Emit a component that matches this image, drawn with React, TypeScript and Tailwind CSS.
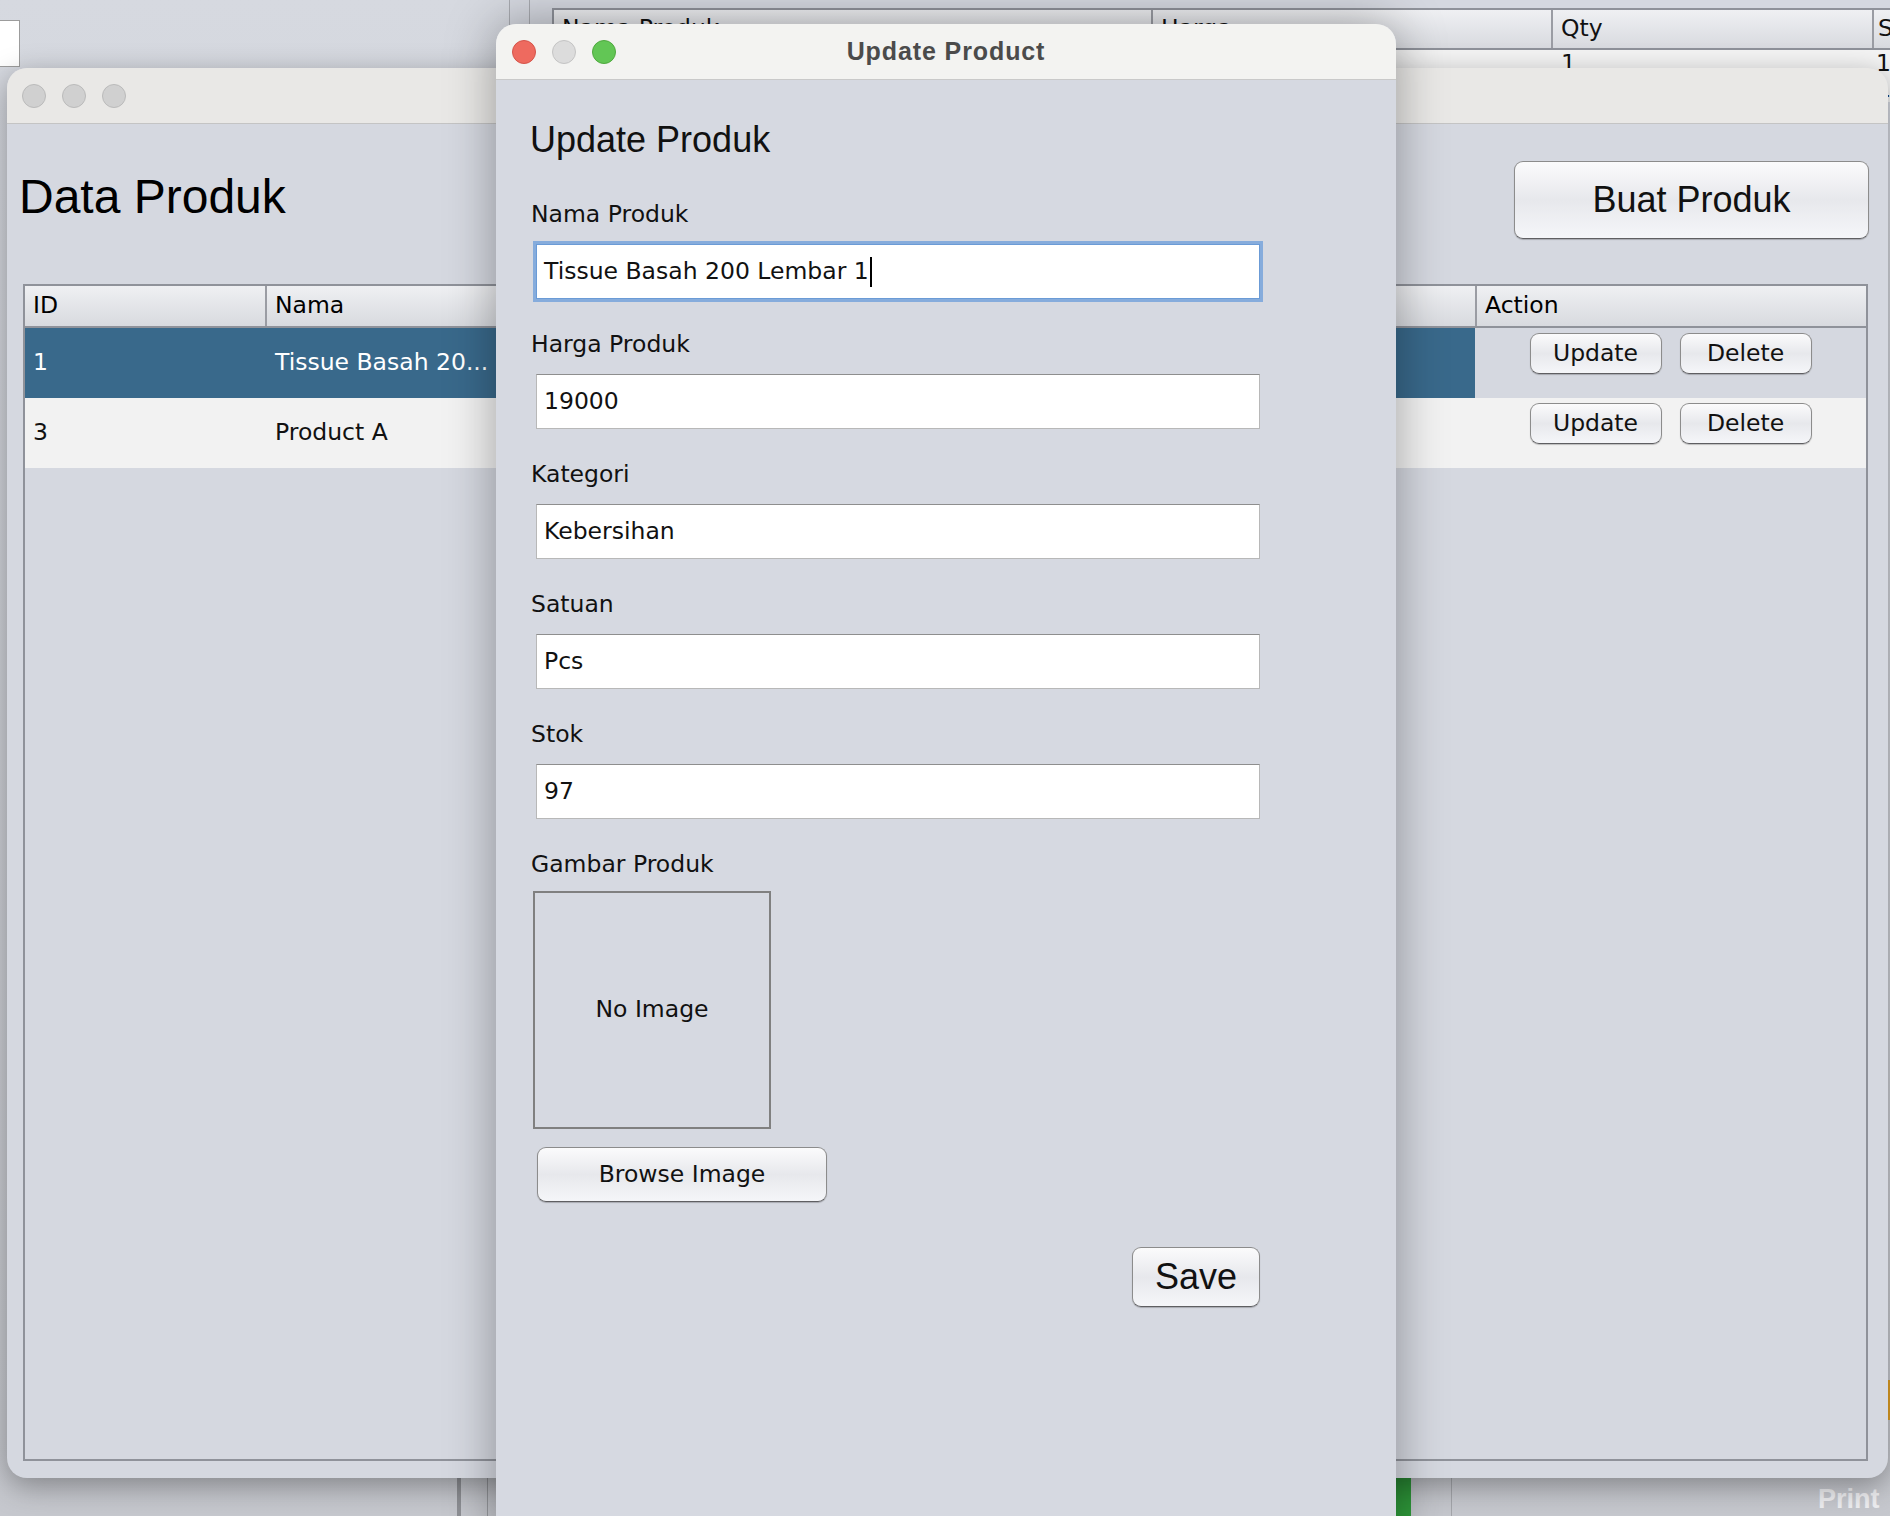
import type { ReactNode } from "react";

const LUCIDA = "font-['DejaVu_Sans',sans-serif]";

function AquaButton({
  children,
  className,
}: {
  children: ReactNode;
  className: string;
}) {
  return (
    <button
      className={`flex items-center justify-center rounded-[9px] border border-[#8c8c8c] border-b-[#5f5f62] bg-linear-to-b from-[#fbfbfc] via-[#e7e8ec] to-[#f5f6f9] text-[#111] shadow-[0_1px_1px_rgba(0,0,0,0.22)] ${className}`}
    >
      {children}
    </button>
  );
}

function Field({
  label,
  value,
  focused,
  first,
}: {
  label: string;
  value: string;
  focused?: boolean;
  first?: boolean;
}) {
  return (
    <div className={first ? "mt-[44px] flex flex-col" : "mt-[32px] flex flex-col"}>
      <div className="h-[27px] text-[23.5px] leading-[27px] text-[#111]">{label}</div>
      <div
        className={
          focused
            ? "mt-[16px] ml-[5px] flex h-[55px] w-[724px] items-center border border-[#6b9bd6] bg-white pl-[7px] shadow-[0_0_0_3px_#86acdc]"
            : "mt-[16px] ml-[5px] flex h-[55px] w-[724px] items-center border border-[#b8b8b8] border-t-[#8e8e8e] bg-white pl-[7px]"
        }
      >
        <span className="text-[23.5px] leading-[27px] text-[#111]">{value}</span>
        {focused && <span className="ml-[1px] inline-block h-[30px] w-[2px] bg-black" />}
      </div>
    </div>
  );
}

function Lights({ colors }: { colors: string[] }) {
  return (
    <div className="flex items-center gap-[16px]">
      {colors.map((c, i) => (
        <span
          key={i}
          className={`h-[24px] w-[24px] rounded-full border ${c}`}
        />
      ))}
    </div>
  );
}

const cols = ["w-[240px]", "w-[420px]", "w-[300px]", "w-[240px]", "w-[250px]"];

function DataWindow() {
  const rows = [
    { id: "1", name: "Tissue Basah 20...", selected: true },
    { id: "3", name: "Product A", selected: false },
  ];
  return (
    <div className="absolute left-[7px] top-[68px] flex h-[1410px] w-[1881px] flex-col overflow-hidden rounded-[20px] bg-[#d5d8e0] shadow-[0_8px_30px_rgba(0,0,0,0.35)]">
      <div className="flex h-[56px] items-center border-b border-[#c4c4c4] bg-[#e9e8e6] pl-[15px]">
        <Lights
          colors={[
            "bg-[#d0d0d0] border-[#bababa]",
            "bg-[#d0d0d0] border-[#bababa]",
            "bg-[#d0d0d0] border-[#bababa]",
          ]}
        />
      </div>
      <div className="flex flex-1 flex-col pb-[17px] pl-[16px] pr-[20px]">
        <div className="flex h-[160px] items-start justify-between">
          <div className="ml-[-4px] mt-[49px] font-['Liberation_Sans',sans-serif] text-[48px] leading-[48px] text-black">
            Data Produk
          </div>
          <AquaButton className="mt-[37px] mr-[-1px] h-[78px] w-[355px] font-['Liberation_Sans',sans-serif] text-[36px]">
            Buat Produk
          </AquaButton>
        </div>
        <div className={`flex flex-1 flex-col border-2 border-[#8f929a] ${LUCIDA} text-[23.5px]`}>
          <div className="flex h-[42px] border-b-2 border-[#8f929a] bg-linear-to-b from-[#eff0f3] to-[#d8dadf]">
            {["ID", "Nama", "Harga", "Kategori", "Stok"].map((h, i) => (
              <div
                key={h}
                className={`${cols[i]} flex shrink-0 items-center pl-[8px] ${i > 0 ? "border-l-2 border-[#9a9ca3]" : ""}`}
              >
                {h}
              </div>
            ))}
            <div className="flex flex-1 items-center border-l-2 border-[#9a9ca3] pl-[8px]">Action</div>
          </div>
          {rows.map((r) => (
            <div
              key={r.id}
              className={r.selected ? "flex h-[70px]" : "flex h-[70px] bg-[#f2f2f2]"}
            >
              {[r.id, r.name, "", "", ""].map((v, i) => (
                <div
                  key={i}
                  className={`${cols[i]} flex shrink-0 items-center whitespace-nowrap ${i === 0 ? "pl-[8px]" : "pl-[10px]"} ${r.selected ? "bg-[#39698b] text-white" : "text-[#111]"}`}
                >
                  {v}
                </div>
              ))}
              <div className="flex flex-1 items-start justify-center gap-[18px] pt-[5px]">
                <AquaButton className="h-[41px] w-[132px] text-[23.5px]">Update</AquaButton>
                <AquaButton className="h-[41px] w-[132px] text-[23.5px]">Delete</AquaButton>
              </div>
            </div>
          ))}
        </div>
      </div>
    </div>
  );
}

function UpdateDialog() {
  return (
    <div className="absolute left-[496px] top-[24px] flex h-[1520px] w-[900px] flex-col overflow-hidden rounded-[20px] bg-[#d6d9e1] shadow-[0_0_50px_rgba(0,0,0,0.35)]">
      <div className="grid h-[56px] grid-cols-[1fr_auto_1fr] items-center border-b border-[#c9c9c9] bg-[#f3f3f1] pl-[16px]">
        <Lights
          colors={[
            "bg-[#ee6a5f] border-[#d5544a]",
            "bg-[#dcdcdc] border-[#c4c4c4]",
            "bg-[#62c655] border-[#4fa93f]",
          ]}
        />
        <div className="pr-[16px] font-['Liberation_Sans',sans-serif] text-[25px] font-bold tracking-[0.9px] text-[#4b4b4b]">
          Update Product
        </div>
        <div />
      </div>
      <div className={`flex flex-col pl-[35px] pt-[42px] ${LUCIDA}`}>
        <div className="ml-[-1px] font-['Liberation_Sans',sans-serif] text-[36px] leading-[35px] text-[#111]">
          Update Produk
        </div>
        <Field first focused label="Nama Produk" value="Tissue Basah 200 Lembar 1" />
        <Field label="Harga Produk" value="19000" />
        <Field label="Kategori" value="Kebersihan" />
        <Field label="Satuan" value="Pcs" />
        <Field label="Stok" value="97" />
        <div className="mt-[32px] h-[27px] text-[23.5px] leading-[27px] text-[#111]">Gambar Produk</div>
        <div className="ml-[2px] mt-[13px] flex h-[238px] w-[238px] items-center justify-center border-2 border-[#808080] text-[23.5px] text-[#111]">
          No Image
        </div>
        <AquaButton className="ml-[6px] mt-[18px] h-[55px] w-[290px] text-[23.5px]">Browse Image</AquaButton>
        <div className="ml-[5px] mt-[45px] flex w-[724px] justify-end">
          <AquaButton className="h-[60px] w-[128px] font-['Liberation_Sans',sans-serif] text-[36px]">
            Save
          </AquaButton>
        </div>
      </div>
    </div>
  );
}

function BackWindow() {
  const widths = ["w-[599px]", "w-[400px]", "w-[321px]"];
  const heads = ["Nama Produk", "Harga", "Qty"];
  return (
    <div className={`absolute left-[509px] right-0 top-0 flex h-[200px] border-l border-[#a8aab0] bg-[#d5d8e0] ${LUCIDA} text-[23.5px] text-[#111]`}>
      <div className="w-[20px] shrink-0 border-r border-[#a8aab0]" />
      <div className="flex min-w-0 flex-1 flex-col overflow-hidden pl-[22px] pt-[8px]">
        <div className="flex h-[42px] border-b-2 border-l-2 border-t-2 border-[#8f929a] bg-linear-to-b from-[#eff0f3] to-[#d8dadf]">
          {heads.map((h, i) => (
            <div key={h} className={`${widths[i]} flex shrink-0 items-center border-r-2 border-[#9a9ca3] pl-[8px]`}>
              {h}
            </div>
          ))}
          <div className="flex w-[80px] shrink-0 items-center pl-[4px]">Stok</div>
        </div>
        {[0, 1].map((r) => (
          <div key={r} className="flex h-[26px] bg-[#f4f4f4] leading-[26px]">
            <div className="w-[599px] shrink-0" />
            <div className="w-[400px] shrink-0" />
            <div className="w-[321px] shrink-0 pl-[10px]">1</div>
            <div className="w-[80px] shrink-0 pl-[4px]">1</div>
          </div>
        ))}
      </div>
    </div>
  );
}

export default function App() {
  return (
    <div className="relative h-[1516px] w-[1890px] overflow-hidden bg-linear-to-b from-[#d6d9e0] to-[#c6c8ce]">
      <BackWindow />
      <div className="absolute left-0 top-[20px] h-[47px] w-[20px] border border-l-0 border-[#9c9c9c] bg-white" />
      <div className="absolute left-[457px] top-[1440px] h-[80px] w-[4px] bg-[#8f9196]" />
      <div className="absolute left-[487px] top-[1440px] h-[80px] w-[1px] bg-[#9a9ca1]" />
      <div className="absolute left-[1395px] top-[1440px] h-[80px] w-[16px] bg-[#2f9b3b]" />
      <div className="absolute left-[1451px] top-[1440px] h-[80px] w-[1px] bg-[#a4a6ab]" />
      <div className="absolute left-[1886px] top-[1380px] h-[40px] w-[4px] bg-[#e3a023]" />
      <div className="absolute left-[1818px] top-[1482px] font-['Liberation_Sans',sans-serif] text-[27px] font-bold leading-[34px] text-[#eeeef1]">
        Print
      </div>
      <DataWindow />
      <UpdateDialog />
    </div>
  );
}
